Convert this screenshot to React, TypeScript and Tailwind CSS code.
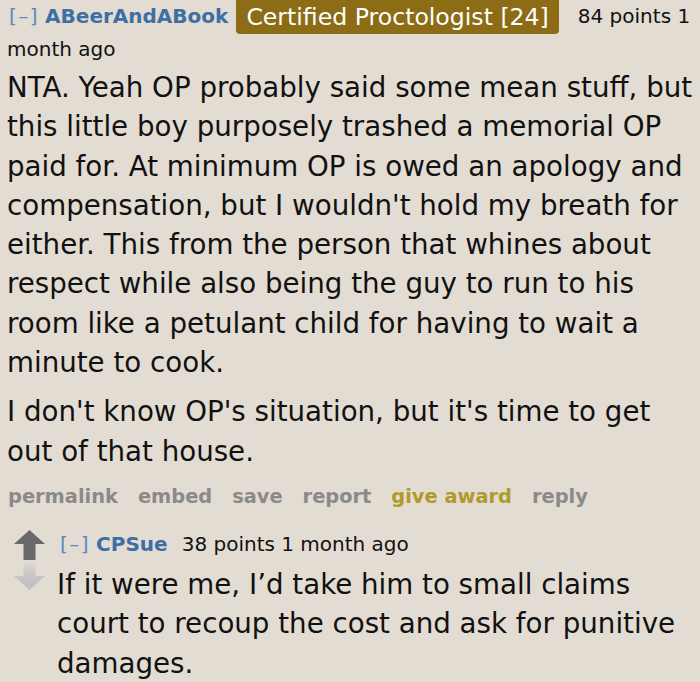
import React from "react";

const font = { fontFamily: '"DejaVu Sans", Verdana, sans-serif' };

export default function App() {
  return (
    <div className="w-[700px] h-[682px] overflow-hidden bg-[#e3dcd2] text-[#111]" style={font}>
      <div className="pl-[7px] pr-[2px]">
        <div className="text-[20px] leading-[31px] pt-[1px]">
          <span className="text-[#5d8bbd] tracking-[1.5px] ml-[2px]">[–]</span>
          <span className="font-bold text-[#3e6fa4] ml-[6px]">ABeerAndABook</span>
          <span className="inline-block align-top bg-[#8c6c14] text-white text-[23.6px] leading-[34px] px-[10px] rounded-b-[4px] ml-[8px] -mt-[1px]">
            Certified Proctologist [24]
          </span>
          <span className="ml-[19px]">84 points 1 month ago</span>
        </div>
        <div className="text-[27.7px] leading-[39.3px] mt-[3px]">
          <p>
            NTA. Yeah OP probably said some mean stuff, but this little boy purposely trashed a memorial OP paid for. At minimum OP is owed an apology and compensation, but I wouldn't hold my breath for either. This from the person that whines about respect while also being the guy to run to his room like a petulant child for having to wait a minute to cook.
          </p>
          <p className="mt-[10px]">I don't know OP's situation, but it's time to get out of that house.</p>
        </div>
        <div className="flex gap-[20px] text-[19.4px] font-bold text-[#8a8a8a] leading-[31px] mt-[10px] pl-[1px]">
          <span>permalink</span>
          <span>embed</span>
          <span>save</span>
          <span>report</span>
          <span className="text-[#b09a2c]">give award</span>
          <span>reply</span>
        </div>
        <div className="flex mt-[17px]">
          <div className="w-[50px] flex flex-col pt-[1px] pl-[7px]">
            <svg width="31" height="30" viewBox="0 0 31 30">
              <polygon points="15.5,0 31,14 21.5,14 21.5,30 9.5,30 9.5,14 0,14" fill="#696969" />
            </svg>
            <svg width="31" height="30" viewBox="0 0 31 30">
              <defs>
                <linearGradient id="g" x1="0" y1="0" x2="0" y2="1">
                  <stop offset="0" stopColor="#e2ddd6" />
                  <stop offset="0.45" stopColor="#c9c8c6" />
                  <stop offset="1" stopColor="#bdbdbd" />
                </linearGradient>
              </defs>
              <polygon points="9.5,0 21.5,0 21.5,16 31,16 15.5,30 0,16 9.5,16" fill="url(#g)" />
            </svg>
          </div>
          <div className="flex-1">
            <div className="text-[20px] leading-[31px]">
              <span className="text-[#5d8bbd] tracking-[1.5px] ml-[3px]">[–]</span>
              <span className="font-bold text-[#3e6fa4] ml-[6px]">CPSue</span>
              <span className="ml-[14px]">38 points 1 month ago</span>
            </div>
            <div className="text-[27.7px] leading-[39.3px] mt-[5px]">
              If it were me, I’d take him to small claims court to recoup the cost and ask for punitive damages.
            </div>
          </div>
        </div>
      </div>
    </div>
  );
}
